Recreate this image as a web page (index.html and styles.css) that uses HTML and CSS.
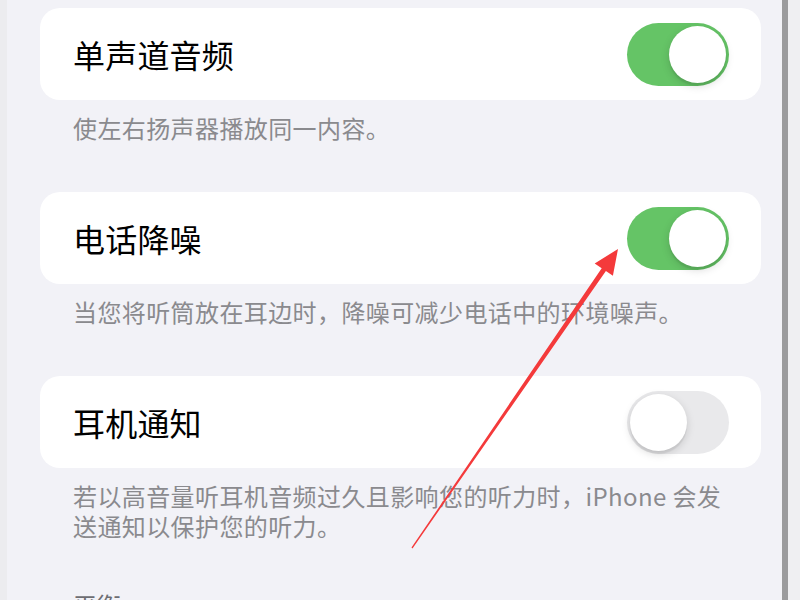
FILE: index.html
```html
<!DOCTYPE html>
<html lang="zh-CN">
<head>
<meta charset="utf-8">
<title>音频设置</title>
<link rel="stylesheet" href="styles.css">
</head>
<body>
<div class="screen">
  <div class="edge-left"></div>
  <main class="main">
    <section class="group">
      <div class="card">
        <span class="label">单声道音频</span>
        <span class="toggle on"><span class="knob"></span></span>
      </div>
      <p class="footer">使左右扬声器播放同一内容。</p>
    </section>
    <section class="group">
      <div class="card">
        <span class="label">电话降噪</span>
        <span class="toggle on"><span class="knob"></span></span>
      </div>
      <p class="footer">当您将听筒放在耳边时，降噪可减少电话中的环境噪声。</p>
    </section>
    <section class="group">
      <div class="card">
        <span class="label">耳机通知</span>
        <span class="toggle off"><span class="knob"></span></span>
      </div>
      <p class="footer">若以高音量听耳机音频过久且影响您的听力时，iPhone&nbsp;会发送通知以保护您的听力。</p>
    </section>
    <h2 class="section-title">平衡</h2>
  </main>
  <div class="rail"></div>
  <div class="edge-right"></div>
  <svg class="arrow" width="800" height="600" viewBox="0 0 800 600">
    <polygon fill="#f43a3b" points="411.5,547.6 601.7,268.2 594.7,263.4 618,249 612.9,275.8 605.9,271 412.5,548.4"/>
  </svg>
</div>
</body>
</html>
```

FILE: styles.css
```css
* { box-sizing: border-box; }

html, body {
  margin: 0;
  padding: 0;
  background: #f2f2f7;
}

body {
  font-family: "Noto Sans CJK SC", "Noto Sans", sans-serif;
}

.screen {
  position: relative;
  display: flex;
  width: 800px;
  height: 600px;
  overflow: hidden;
  background: #f2f2f7;
}

.edge-left {
  width: 7px;
  flex: none;
  background: #ececef;
}

.main {
  flex: 1;
  padding: 8px 21px 0 33px;
}

.rail {
  width: 6px;
  flex: none;
  background: #9b9b9d;
}

.edge-right {
  width: 12px;
  flex: none;
  background: #efeff2;
}

.group {
  margin-bottom: 49px;
}

.card {
  height: 92px;
  background: #ffffff;
  border-radius: 20px;
  display: flex;
  align-items: center;
  justify-content: space-between;
  padding: 0 32px 0 33px;
}

.label {
  font-size: 32px;
  color: #000000;
  letter-spacing: 0.2px;
}

.toggle {
  width: 102px;
  height: 63px;
  border-radius: 32px;
  display: flex;
  align-items: center;
  padding: 0 3px;
}

.toggle.on {
  background: #65c466;
  justify-content: flex-end;
}

.toggle.off {
  background: #e9e9eb;
  justify-content: flex-start;
}

.knob {
  width: 57px;
  height: 57px;
  border-radius: 50%;
  background: #ffffff;
  box-shadow: 0 3px 8px rgba(0, 0, 0, 0.15), 0 3px 1px rgba(0, 0, 0, 0.06);
}

.footer {
  margin: 0;
  padding: 13px 33px 0 33px;
  font-size: 24px;
  line-height: 30px;
  letter-spacing: 0.4px;
  color: #8a8a8e;
}

.section-title {
  margin: 0;
  padding-left: 33px;
  font-size: 24px;
  font-weight: normal;
  line-height: 30px;
  color: #6d6d72;
}

.arrow {
  position: absolute;
  left: 0;
  top: 0;
  pointer-events: none;
}
```
